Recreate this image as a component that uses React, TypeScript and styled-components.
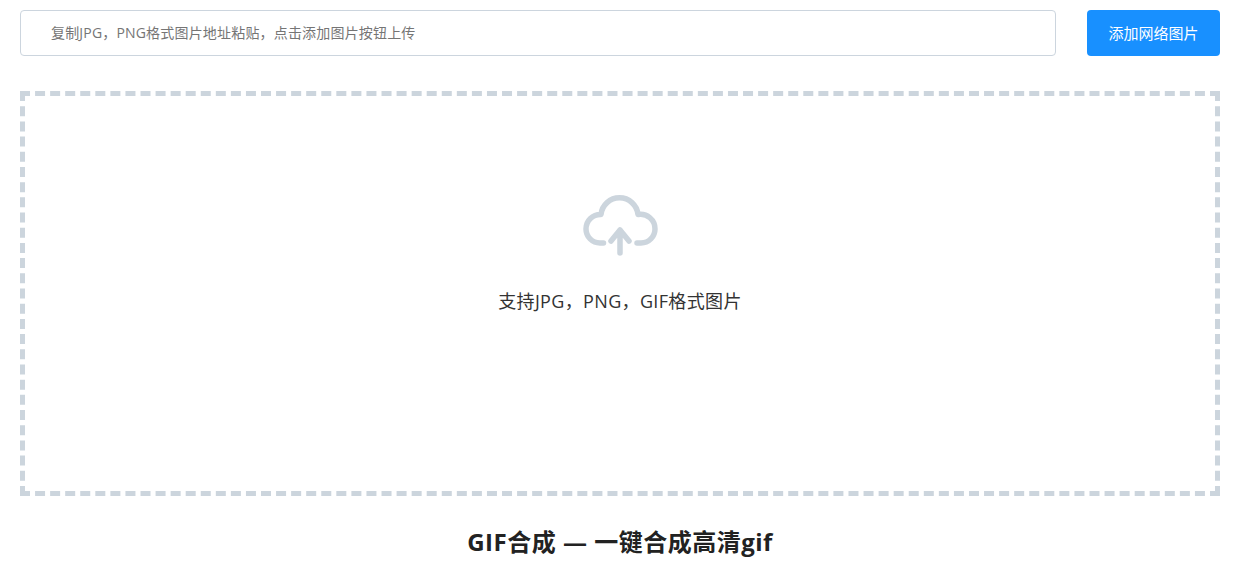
import React from 'react';
import styled, { createGlobalStyle } from 'styled-components';

const GlobalStyle = createGlobalStyle`
  html, body {
    margin: 0;
    padding: 0;
    background: #fff;
    font-family: "Open Sans", "Noto Sans CJK SC", sans-serif;
  }
`;

const Page = styled.div`
  width: 1247px;
  height: 587px;
  overflow: hidden;
  box-sizing: border-box;
  padding: 10px 27px 0 20px;
`;

const Toolbar = styled.div`
  display: flex;
  justify-content: space-between;
  height: 46px;
`;

const UrlInput = styled.input`
  width: 1036px;
  height: 46px;
  box-sizing: border-box;
  padding: 0 30px 2px;
  border: 1px solid #ccd5de;
  border-radius: 4px;
  outline: none;
  font-family: inherit;
  font-size: 14px;
  letter-spacing: 0.18px;
  color: #333;

  &::placeholder {
    color: #757575;
    opacity: 1;
  }
`;

const AddButton = styled.button`
  width: 133px;
  height: 46px;
  padding: 0 0 2px;
  border: none;
  border-radius: 4px;
  background: #1890ff;
  color: #fff;
  font-family: inherit;
  font-size: 15px;
  cursor: pointer;
`;

const DropZone = styled.div`
  height: 405px;
  margin-top: 35px;
  box-sizing: border-box;
  border: 5px dashed #ccd5dd;
  display: flex;
  flex-direction: column;
  align-items: center;
  padding-top: 99px;
`;

const CloudIcon = styled.svg`
  display: block;
  width: 76px;
  height: 62px;
  color: #ccd5dd;
`;

const Hint = styled.p`
  margin: 32px 0 0;
  font-size: 18px;
  line-height: 24px;
  letter-spacing: 0.35px;
  color: #333;
`;

const Title = styled.h1`
  margin: 28px 0 0;
  font-size: 24px;
  line-height: 36px;
  font-weight: 700;
  letter-spacing: 0.5px;
  text-align: center;
  color: #222;
`;

const App: React.FC = () => {
  return (
    <>
      <GlobalStyle />
      <Page>
        <Toolbar>
          <UrlInput placeholder="复制JPG，PNG格式图片地址粘贴，点击添加图片按钮上传" />
          <AddButton>添加网络图片</AddButton>
        </Toolbar>
        <DropZone>
          <CloudIcon viewBox="-1 0 76 62" fill="none" stroke="currentColor" strokeWidth="5.5" strokeLinecap="round" strokeLinejoin="round">
            <path d="M20.5 48H17A14 14 0 0 1 3 34A14.5 14.5 0 0 1 18 19.5A18.6 18.6 0 0 1 55 19.5A14.5 14.5 0 0 1 72 34A14 14 0 0 1 58 48H54" />
            <path d="M37 58V35M28 46L37 35L46 46" />
          </CloudIcon>
          <Hint>支持JPG，PNG，GIF格式图片</Hint>
        </DropZone>
        <Title>GIF合成 — 一键合成高清gif</Title>
      </Page>
    </>
  );
};

export default App;
